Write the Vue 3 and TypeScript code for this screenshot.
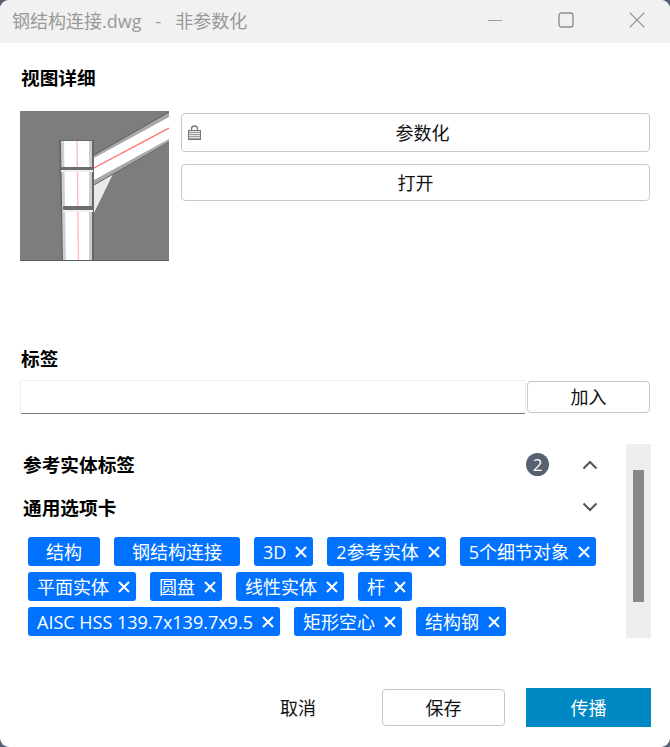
<script setup lang="ts">
interface Tag {
  label: string
  removable: boolean
}

const tagRows: Tag[] = [
  { label: '结构', removable: false },
  { label: '钢结构连接', removable: false },
  { label: '3D', removable: true },
  { label: '2参考实体', removable: true },
  { label: '5个细节对象', removable: true },
  { label: '平面实体', removable: true },
  { label: '圆盘', removable: true },
  { label: '线性实体', removable: true },
  { label: '杆', removable: true },
  { label: 'AISC HSS 139.7x139.7x9.5', removable: true },
  { label: '矩形空心', removable: true },
  { label: '结构钢', removable: true },
]
</script>

<template>
  <div class="frame">
    <div class="window">
      <header class="titlebar">
        <span class="title">钢结构连接.dwg &nbsp; - &nbsp; 非参数化</span>
        <div class="controls">
          <svg width="16" height="16" viewBox="0 0 16 16"><path d="M1 8.500h14" stroke="#999" fill="none" /></svg>
          <svg width="16" height="16" viewBox="0 0 16 16"><rect x="1" y="1" width="14" height="14" rx="2.500" stroke="#8f8f8f" stroke-width="1.400" fill="none" /></svg>
          <svg width="16" height="16" viewBox="0 0 16 16"><path d="M.7.7l14.600 14.600M15.300.7L.7 15.300" stroke="#8f8f8f" stroke-width="1.200" fill="none" /></svg>
        </div>
      </header>

      <main class="content">
        <h2 class="heading detail-heading">视图详细</h2>

        <section class="detail">
          <svg class="thumb" width="149" height="150" viewBox="0 0 149 150">
            <rect width="149" height="150" fill="#7d7d7d" />
            <polygon points="74,73 93,63 74,102" fill="#eaeaea" />
            <polygon points="74,44 149,1 149,31 74,74" fill="#a8a8a8" />
            <polygon points="74,47 149,6 149,28 74,69" fill="#fff" />
            <path d="M74 44L149 1" stroke="#5c5c5c" fill="none" />
            <path d="M74 74L149 31" stroke="#6a6a6a" fill="none" />
            <path d="M74 57L149 17" stroke="#f66" stroke-width="1.200" fill="none" />
            <polygon points="39,29 74,29 74,150 42,150" fill="#666" />
            <polygon points="41,30 72,30 72,150 43,150" fill="#cfcfcf" />
            <polygon points="44,30 69,30 69,150 46,150" fill="#fff" />
            <path d="M57 30L58.500 150" stroke="#fbb" stroke-width="1.400" fill="none" />
            <rect x="41" y="56" width="32" height="3" fill="#6e6e6e" />
            <rect x="41" y="59" width="32" height="2" fill="#eee" />
            <rect x="43" y="95" width="30" height="4" fill="#6e6e6e" />
            <rect x="43" y="99" width="30" height="2" fill="#f2f2f2" />
            <rect x="0" y="149" width="149" height="1" fill="#58606b" />
          </svg>

          <div class="detail-actions">
            <button class="btn param-btn">
              <svg class="lock" width="13" height="15" viewBox="0 0 13 15">
                <path d="M3.500 6V4a3 3 0 0 1 6 0v2" stroke="#777" stroke-width="1.300" fill="none" />
                <rect x="0.500" y="5.500" width="12" height="9" fill="#e6e6e6" stroke="#777" />
                <path d="M1 7.500h11M1 9.500h11M1 11.500h11M1 13.500h11" stroke="#a0a0a0" fill="none" />
              </svg>
              <span class="param-label">参数化</span>
            </button>
            <button class="btn open-btn">打开</button>
          </div>
        </section>

        <h2 class="heading tags-heading">标签</h2>
        <div class="tag-input">
          <input class="field" type="text" />
          <button class="btn add-btn">加入</button>
        </div>

        <section class="panel">
          <div class="panel-body">
            <div class="accordion-row first">
              <span class="row-title">参考实体标签</span>
              <span class="badge">2</span>
              <svg class="chevron" width="16" height="10" viewBox="0 0 16 10"><path d="M1.500 8.500L8 2l6.500 6.500" stroke="#555" stroke-width="2" fill="none" /></svg>
            </div>
            <div class="accordion-row">
              <span class="row-title">通用选项卡</span>
              <svg class="chevron" width="16" height="10" viewBox="0 0 16 10"><path d="M1.500 1.500L8 8l6.500-6.500" stroke="#555" stroke-width="2" fill="none" /></svg>
            </div>
            <div class="tags">
              <span v-for="tag in tagRows" :key="tag.label" class="tag" :class="{ fixed: !tag.removable }">
                <span class="tag-text">{{ tag.label }}</span>
                <svg v-if="tag.removable" width="12" height="12" viewBox="0 0 12 12"><path d="M1 1l10 10M11 1L1 11" stroke="#fff" stroke-width="2" fill="none" /></svg>
              </span>
            </div>
          </div>
          <div class="scrollbar"><div class="thumb-bar"></div></div>
        </section>

        <footer class="footer">
          <button class="cancel">取消</button>
          <button class="btn save-btn">保存</button>
          <button class="publish">传播</button>
        </footer>
      </main>
    </div>
  </div>
</template>

<style scoped>
.frame {
  width: 670px;
  height: 747px;
  background: #566070;
  overflow: hidden;
  font-family: "Noto Sans CJK SC", "Liberation Sans", sans-serif;
  font-size: 18px;
  color: #111;
}
.window { height: 100%; background: #fff; border-radius: 9px; overflow: hidden; }
.titlebar {
  height: 43px;
  box-sizing: border-box;
  background: #f1f1f1;
  display: flex;
  align-items: center;
  justify-content: space-between;
  padding: 0 25px 3px 12px;
}
.title { font-family: "Open Sans", "Noto Sans CJK SC", sans-serif; font-size: 18px; color: #999; white-space: nowrap; }
.controls { display: flex; gap: 55px; align-items: center; }
.content { padding: 0 20px; }
.heading { margin: 0; font-size: 18.670px; font-weight: 700; line-height: 24px; color: #000; padding-left: 1px; }
.detail-heading { margin-top: 22px; }
.detail { display: flex; gap: 12px; margin-top: 22px; height: 150px; }
.thumb { display: block; flex: none; }
.detail-actions { flex: 1; padding-top: 2px; display: flex; flex-direction: column; gap: 12px; }
.btn {
  background: #fff;
  border: 1px solid #c8c8c8;
  border-radius: 4px;
  font: inherit;
  color: #111;
  padding: 0 0 2px;
  line-height: 1;
}
.param-btn { height: 39px; display: flex; align-items: center; padding-left: 6px; }
.lock { flex: none; margin-top: 2px; }
.param-label { flex: 1; text-align: center; padding-right: 5px; }
.open-btn { height: 37px; }
.tags-heading { margin-top: 85px; }
.tag-input { display: flex; align-items: center; gap: 1px; margin-top: 10px; }
.field {
  width: 506px;
  height: 34px;
  box-sizing: border-box;
  border: 1px solid #eee;
  border-bottom: 1px solid #7a7a7a;
  border-radius: 2px;
  outline: none;
  background: #fff;
}
.add-btn { width: 123px; height: 32px; }
.panel { display: flex; margin-top: 30px; height: 194px; margin-right: -1px; }
.panel-body { flex: 1; min-width: 0; }
.accordion-row { display: flex; align-items: center; height: 42px; box-sizing: border-box; padding: 0 0 2px 3px; }
.accordion-row.first { height: 43px; }
.first .row-title { padding-bottom: 2px; }
.row-title { font-size: 18.670px; font-weight: 700; line-height: 24px; color: #000; flex: 1; }
.badge {
  width: 23px;
  height: 23px;
  border-radius: 50%;
  background: #566070;
  color: #fff;
  font-size: 17px;
  line-height: 23px;
  text-align: center;
  font-family: "Open Sans", sans-serif;
}
.chevron { margin: 0 28px 0 33px; }
.tags { display: flex; flex-wrap: wrap; gap: 6px 14px; padding: 8px 0 0 8px; }
.tag {
  height: 29px;
  box-sizing: border-box;
  display: inline-flex;
  align-items: center;
  gap: 9px;
  padding: 0 6px 0 9px;
  background: #0072ff;
  border-radius: 3px;
  color: #fff;
  font-family: "Open Sans", "Noto Sans CJK SC", sans-serif;
  font-size: 18px;
  white-space: nowrap;
}
.tag-text { line-height: 1; }
.tag.fixed { padding: 0 18px; }
.scrollbar { width: 25px; background: #eee; padding: 26px 7px 0; box-sizing: border-box; flex: none; }
.thumb-bar { height: 132px; background: #888; }
.footer { display: flex; align-items: center; justify-content: flex-end; margin-top: 50px; margin-right: -1px; }
.cancel { border: 0; background: none; font: inherit; color: #111; width: 124px; padding: 0 0 2px; margin-right: 22px; line-height: 1; }
.save-btn { width: 123px; height: 37px; margin-right: 21px; }
.publish { width: 125px; height: 39px; border: 0; background: #0088c4; color: #fff; font: inherit; padding: 0 0 2px; line-height: 1; }
</style>

<style>
html, body { margin: 0; background: #566070; }
</style>
